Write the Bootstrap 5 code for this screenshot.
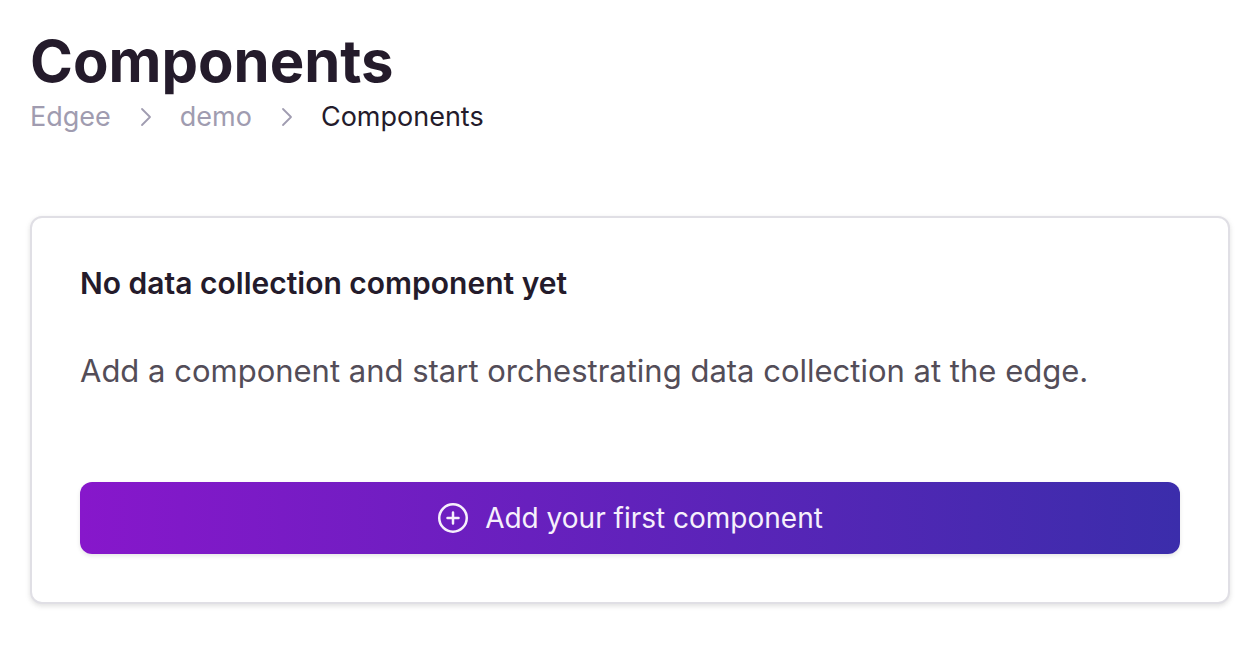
<!DOCTYPE html>
<html lang="en">
<head>
<meta charset="utf-8">
<meta name="viewport" content="width=device-width, initial-scale=1">
<title>Components</title>
<link href="https://cdn.jsdelivr.net/npm/bootstrap@5.3.0/dist/css/bootstrap.min.css" rel="stylesheet">
<style>
body { font-family: Inter, "Liberation Sans", sans-serif; color: #241b2b; background: #fff; }
.page { padding: 31px 28px 48px 30px; }
.page-title { font-size: 58px; line-height: 60px; font-weight: 700; margin: 0; }
.crumbs { font-size: 27px; line-height: 40px; margin: 6px 0 79px; }
.crumbs a { color: #a09cb0; text-decoration: none; }
.crumbs svg { width: 24px; height: 24px; margin: 0 22px 0 23px; color: #a09cb0; }
.empty-card { border: 2px solid #e0dfe5; border-radius: 12px; padding: 47px 48px 48px; box-shadow: 0 2px 6px rgba(0,0,0,.08), 0 2px 4px rgba(0,0,0,.05); }
.empty-title { font-size: 30px; line-height: 36px; font-weight: 600; margin: 0; }
.empty-text { font-size: 31px; line-height: 48px; color: #534d58; margin: 46px 0 87px; }
.btn-add, .btn-add:hover { color: #f6f0fc; background: linear-gradient(to right, #8717cb, #3b2dab); }
.btn-add { font-size: 28px; line-height: 40px; padding: 16px; border: 0; border-radius: 12px; gap: 16px; box-shadow: 0 2px 4px rgba(0,0,0,.1); }
.btn-add svg { width: 32px; height: 32px; }
</style>
</head>
<body>
<main class="page container-fluid">
  <h1 class="page-title">Components</h1>
  <nav class="crumbs d-flex align-items-center" aria-label="Breadcrumb">
    <a href="#">Edgee</a>
    <svg viewBox="0 0 24 24" fill="none" stroke="currentColor" stroke-width="1.8" stroke-linecap="round" stroke-linejoin="round" aria-hidden="true"><path d="M8 4l8 8-8 8"/></svg>
    <a href="#">demo</a>
    <svg viewBox="0 0 24 24" fill="none" stroke="currentColor" stroke-width="1.8" stroke-linecap="round" stroke-linejoin="round" aria-hidden="true"><path d="M8 4l8 8-8 8"/></svg>
    <span aria-current="page">Components</span>
  </nav>
  <section class="card empty-card">
    <h2 class="empty-title">No data collection component yet</h2>
    <p class="empty-text">Add a component and start orchestrating data collection at the edge.</p>
    <button type="button" class="btn btn-add w-100 d-flex align-items-center justify-content-center">
      <svg viewBox="0 0 32 32" fill="none" stroke="currentColor" stroke-width="2.5" stroke-linecap="round" aria-hidden="true"><circle cx="16" cy="16" r="13.75"/><path d="M16 10.500v11M10.500 16h11"/></svg>
      Add your first component
    </button>
  </section>
</main>
<script src="https://cdn.jsdelivr.net/npm/bootstrap@5.3.0/dist/js/bootstrap.bundle.min.js"></script>
</body>
</html>
